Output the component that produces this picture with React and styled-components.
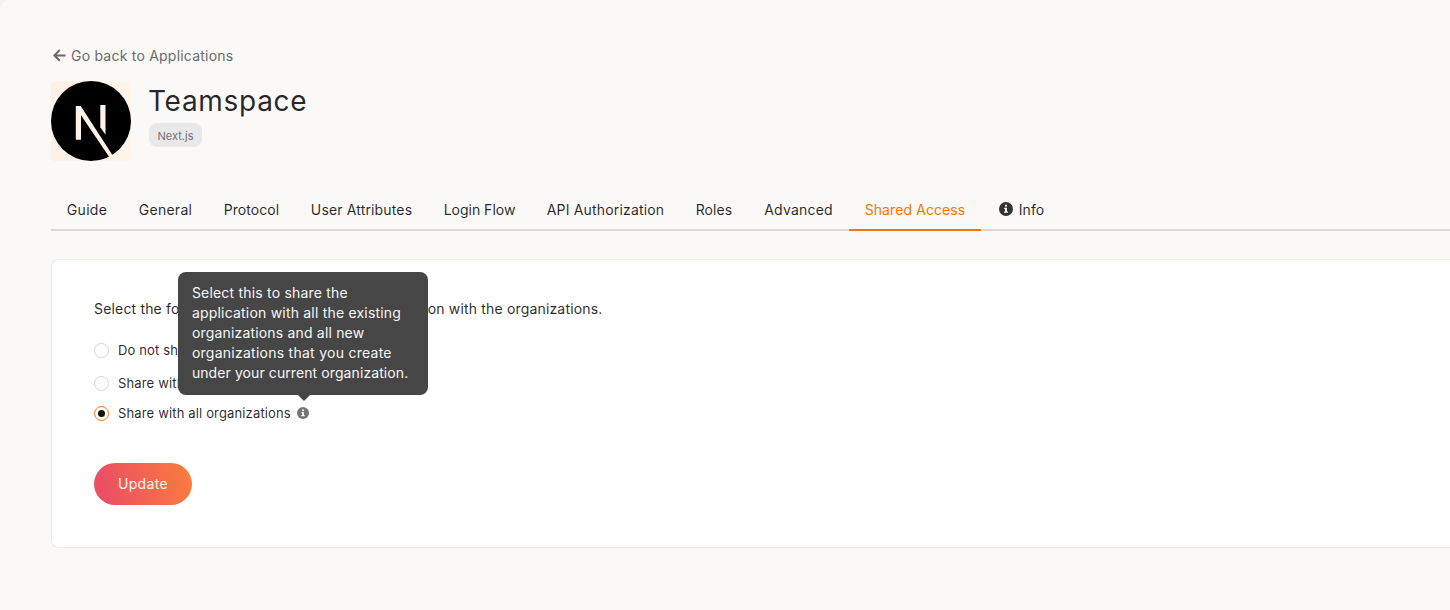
import React from "react";
import styled, { createGlobalStyle } from "styled-components";

const Global = createGlobalStyle`
  * { box-sizing: border-box; }
  body {
    margin: 0;
    background: #f4f3f1;
    overflow: hidden;
    font-family: Inter, "Liberation Sans", sans-serif;
    font-size: 14px;
    font-weight: 400;
    color: rgba(0, 0, 0, 0.85);
  }
`;

const Page = styled.main`
  height: 610px;
  padding: 46px 0 0 51px;
  background: #faf9f7;
  border-top-left-radius: 10px;
  overflow: hidden;
`;

const Label = styled.span`
  white-space: nowrap;
  letter-spacing: ${(p) => p.$ls || 0}px;
`;

const BackLink = styled.a`
  display: flex;
  align-items: center;
  gap: 5px;
  height: 20px;
  padding-left: 2px;
  color: #6b6a69;
  svg { margin-top: -1px; }
  ${Label} { margin-top: -1px; }
`;

const Header = styled.header`
  display: flex;
  gap: 18px;
  height: 80px;
  margin-top: 15px;
`;

const Logo = styled.div`
  width: 80px;
  height: 80px;
  border-radius: 4px;
  background: linear-gradient(90deg, #fff0e8, #fff5e9);
  svg { display: block; }
`;

const Title = styled.h1`
  margin: 0 0 0 -1px;
  padding-top: 1px;
  font-size: 28px;
  line-height: 38px;
  font-weight: 400;
  letter-spacing: ${(p) => p.$ls}px;
`;

const Chip = styled.div`
  display: flex;
  align-items: center;
  justify-content: center;
  width: 53px;
  height: 24px;
  margin-top: 3px;
  padding-top: 1px;
  border-radius: 8px;
  background: #e8e8e8;
  color: #727272;
  font-size: 11px;
`;

const Tabs = styled.nav`
  display: flex;
  height: 40px;
  margin-top: 30px;
  border-bottom: 2px solid #d9d9d7;
`;

const Tab = styled.a`
  display: flex;
  align-items: center;
  justify-content: center;
  gap: 6px;
  flex: none;
  width: ${(p) => p.$w}px;
  height: 40px;
  padding-bottom: 2px;
  color: ${(p) => (p.$active ? "#ff7300" : "rgba(0,0,0,0.85)")};
  border-bottom: 2px solid ${(p) => (p.$active ? "#ff7300" : "transparent")};
  svg { color: #333; }
`;

const Card = styled.section`
  height: 289px;
  margin-top: 28px;
  padding: 39px 42px;
  background: #fff;
  border: 1px solid #ebebea;
  border-right: 0;
  border-radius: 8px 0 0 8px;
`;

const Intro = styled.p`
  margin: 0 0 15px;
  line-height: 20px;
`;

const Option = styled.label`
  display: flex;
  align-items: center;
  height: ${(p) => p.$h}px;
  font-size: 13px;
`;

const Radio = styled.i`
  display: flex;
  align-items: center;
  justify-content: center;
  width: 15px;
  height: 15px;
  margin-right: 9px;
  border-radius: 50%;
  border: 1px solid ${(p) => (p.$on ? "#ff7300" : "#d4d4d5")};
  &::after {
    content: "";
    width: 7px;
    height: 7px;
    border-radius: 50%;
    background: ${(p) => (p.$on ? "#101010" : "transparent")};
  }
`;

const Hint = styled.span`
  position: relative;
  display: flex;
  margin-left: 6px;
  color: #757575;
`;

const Tooltip = styled.div`
  position: absolute;
  left: -119px;
  bottom: 24px;
  width: 250px;
  height: 123px;
  padding: 11px 14px;
  border-radius: 8px;
  background: #464646;
  color: #f6f6f6;
  font-size: 14px;
  line-height: 20px;
  &::after {
    content: "";
    position: absolute;
    left: 120px;
    top: 123px;
    border: 6px solid transparent;
    border-top-color: #464646;
    border-bottom: 0;
  }
  span { display: block; }
`;

const Button = styled.button`
  display: block;
  width: 98px;
  height: 42px;
  margin-top: 37px;
  padding: 0 0 1px;
  border: 0;
  border-radius: 21px;
  background: linear-gradient(77deg, #eb4f63 12%, #fa7b3f 95%);
  color: #fff5f0;
  font: inherit;
`;

const InfoIcon = ({ size, dot = "#fff" }) => (
  <svg width={size} height={size} viewBox="0 0 14 14">
    <circle cx="7" cy="7" r="7" fill="currentColor" />
    <path d="M6 2.8h2v1.8H6zM5.2 5.8H8v3.6h.9v1.3H5.1V9.4H6V7.1h-.8z" fill={dot} />
  </svg>
);

const ArrowLeft = () => (
  <svg width="13" height="13" viewBox="0 0 13 13" fill="none" stroke="currentColor" strokeWidth="2">
    <path d="M6.7 1 1.4 6.4l5.3 5.4M1.6 6.4h11" />
  </svg>
);

const NextLogo = () => (
  <svg width="80" height="80" viewBox="0 0 80 80">
    <circle cx="40" cy="40" r="40" fill="#000" />
    <path d="M24.8 25h4.9l31.9 49.2-3.2 2.1L30 34.2v24.5h-5.2z" fill="#fff1e8" />
    <path d="M49.3 24h5.2v29.8l-5.2-7.6z" fill="#fff3e8" />
  </svg>
);

const tabs = [
  ["Guide", 72, 0.3],
  ["General", 85, 0.25],
  ["Protocol", 87, 0.08],
  ["User Attributes", 133, 0.15],
  ["Login Flow", 103, 0],
  ["API Authorization", 149, 0.17],
  ["Roles", 68, 0.1],
  ["Advanced", 101, 0.2],
  ["Shared Access", 132, 0.1],
];

const tooltipLines = [
  ["Select this to share the", 0.2],
  ["application with all the existing", 0.2],
  ["organizations and all new", 0.18],
  ["organizations that you create", 0.26],
  ["under your current organization.", 0.09],
];

export default function App() {
  return (
    <>
      <Global />
      <Page>
        <BackLink>
          <ArrowLeft />
          <Label $ls={0.22}>Go back to Applications</Label>
        </BackLink>
        <Header>
          <Logo><NextLogo /></Logo>
          <div>
            <Title $ls={0.7}>Teamspace</Title>
            <Chip><Label>Next.js</Label></Chip>
          </div>
        </Header>
        <Tabs>
          {tabs.map(([name, w, ls]) => (
            <Tab key={name} $w={w} $active={name === "Shared Access"}>
              <Label $ls={ls}>{name}</Label>
            </Tab>
          ))}
          <Tab $w={81}>
            <InfoIcon size={14} dot="#fbfaf8" />
            <Label $ls={0.1}>Info</Label>
          </Tab>
        </Tabs>
        <Card>
          <Intro>
            <Label $ls={0.17}>Select the following options to share the application with the organizations.</Label>
          </Intro>
          <Option $h={32}>
            <Radio />
            <Label $ls={0.15}>Do not share with any organization</Label>
          </Option>
          <Option $h={34}>
            <Radio />
            <Label $ls={0.15}>Share with only selected organizations</Label>
          </Option>
          <Option $h={26}>
            <Radio $on />
            <Label $ls={0.15}>Share with all organizations</Label>
            <Hint>
              <InfoIcon size={12} />
              <Tooltip>
                {tooltipLines.map(([line, ls]) => (
                  <Label key={line} $ls={ls}>{line}</Label>
                ))}
              </Tooltip>
            </Hint>
          </Option>
          <Button><Label $ls={0.35}>Update</Label></Button>
        </Card>
      </Page>
    </>
  );
}
